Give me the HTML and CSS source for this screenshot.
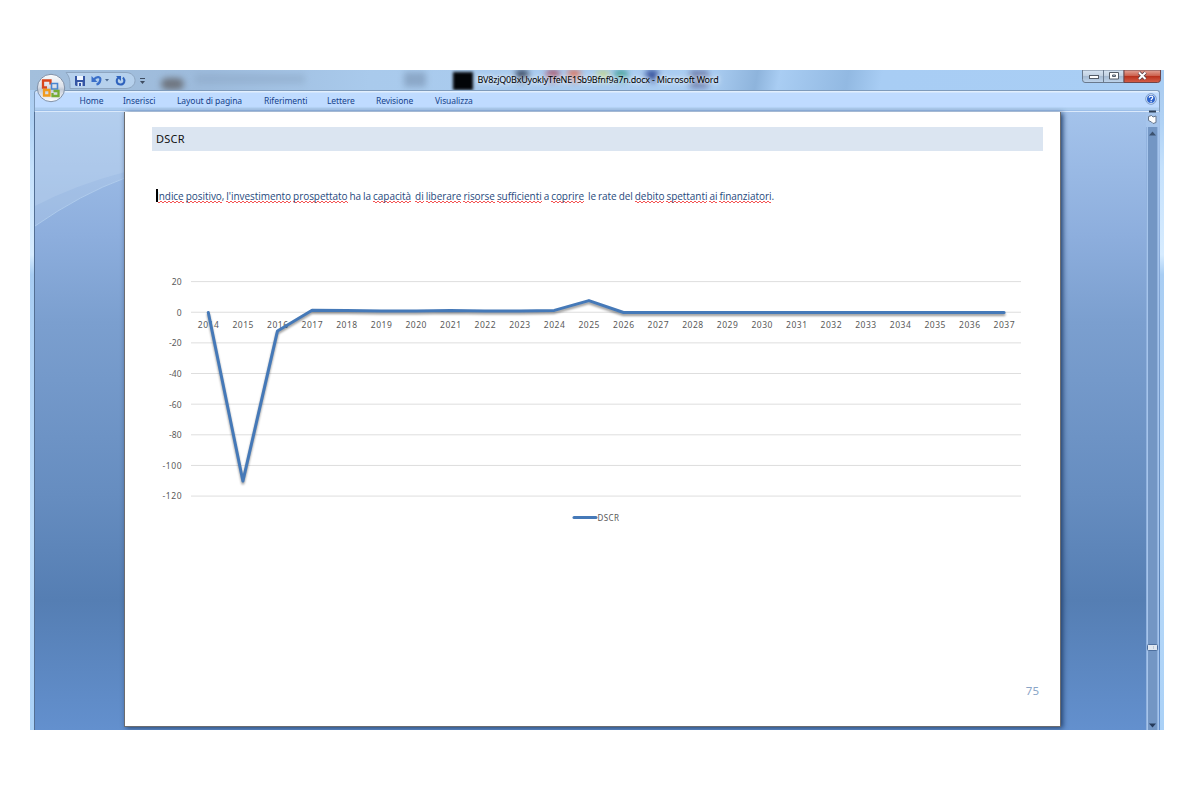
FILE: index.html
```html
<!DOCTYPE html>
<html lang="it">
	<head>
		<meta charset="utf-8">
		<title>Microsoft Word</title>
		<link rel="stylesheet" href="styles.css">
	</head>
	<body>
		<div class="window">
			<header class="titlebar">
				<!-- desktop seen through the glass -->
				<div class="glass">
					<i class="spot s0"></i><i class="spot s1"></i><i class="spot s2"></i><i class="spot s3"></i><i class="spot s4"></i><i class="spot s5"></i>
					<i class="spot s6"></i><i class="spot s7"></i><i class="spot s8"></i><i class="spot s9"></i><i class="spot s10"></i>
				</div>
				<svg class="quick" width="116" height="20" viewBox="0 0 116 20">
					<path d="M2 2.500H62C74 3 74 18 62 18.500H6C6 11 6 7 2 2.500Z" fill="#c5def8" fill-opacity=".6" stroke="#8ea6c1"/>
					<path d="M11 6h10v10H12l-1-1z" fill="#3455a4"/>
					<path d="M13 6h6v4h-6z" fill="#eef5ff"/>
					<path d="M13.500 12h5v4h-5z" fill="#dce8f8"/>
					<path d="M15 13h2v3h-2z" fill="#3455a4"/>
					<path d="M30 9.500C32.500 6 37 6.500 36.300 10C36 12.500 34.500 14 32.500 14.500" fill="none" stroke="#3a6fc9" stroke-width="2.200"/>
					<path d="M27.500 6v6h6z" fill="#3a6fc9"/>
					<path d="M41 9h4l-2 2.500z" fill="#49688f"/>
					<path d="M54.500 7.500C51.500 10 52.500 14.500 56.500 14.500S61.500 10.500 59 7.500" fill="none" stroke="#2f62bd" stroke-width="2"/>
					<path d="M52 6h5v5z" fill="#2f62bd"/>
					<path d="M76 8.500h5" stroke="#3e4c60"/>
					<path d="M76 11h5l-2.500 3z" fill="#3e4c60"/>
				</svg>
				<h1>BV8zjQ0BxUyoklyTfeNE1Sb9Bfnf9a7n.docx - Microsoft Word</h1>
				<svg class="controls" width="79" height="13" viewBox="0 0 79 13">
					<defs>
						<linearGradient id="btn" x2="0" y2="1">
							<stop offset="0" stop-color="#d8e5f3"/><stop offset=".45" stop-color="#c2d1e2"/>
							<stop offset=".5" stop-color="#a5b9d0"/><stop offset="1" stop-color="#c0d6ed"/>
						</linearGradient>
						<linearGradient id="close" x2="0" y2="1">
							<stop offset="0" stop-color="#e3a69a"/><stop offset=".45" stop-color="#cd6350"/>
							<stop offset=".5" stop-color="#b8301c"/><stop offset="1" stop-color="#d5604a"/>
						</linearGradient>
					</defs>
					<path d="M.500 0H42V12.500H3Q.500 12.500 .500 9.500Z" fill="url(#btn)" stroke="#69798d"/>
					<path d="M42 0H78.500V9.500Q78.500 12.500 75.500 12.500H42Z" fill="url(#close)" stroke="#6f4549"/>
					<path d="M21.500 0v12" stroke="#69798d"/>
					<rect x="7.500" y="5.500" width="9" height="3" fill="#fff" stroke="#555d68"/>
					<path d="M27.500 2.500h9v6.500h-9zM30.500 5h3v1.500h-3z" fill="#fff" fill-rule="evenodd" stroke="#555d68"/>
					<path d="M57 2.500l6.500 6.500M63.500 2.500l-6.500 6.500" stroke="#583c43" stroke-width="3.600"/>
					<path d="M57 2.500l6.500 6.500M63.500 2.500l-6.500 6.500" stroke="#fff" stroke-width="2"/>
				</svg>
			</header>

			<nav class="ribbon">
				<a class="t1">Home</a>
				<a class="t2">Inserisci</a>
				<a class="t3">Layout di pagina</a>
				<a class="t4">Riferimenti</a>
				<a class="t5">Lettere</a>
				<a class="t6">Revisione</a>
				<a class="t7">Visualizza</a>
				<svg class="help" width="12" height="12" viewBox="0 0 12 12">
					<circle cx="6" cy="6" r="5.300" fill="#d9e8fa" stroke="#7c9cc8"/>
					<circle cx="6" cy="6" r="4" fill="#2c63cd"/>
					<path d="M4.300 4.700C4.300 2.500 8 2.700 7.700 4.700C7.500 5.700 6.100 5.800 6.100 7.200M6.100 8v1.200" fill="none" stroke="#fff" stroke-width="1.200"/>
				</svg>
			</nav>

			<!-- office button -->
			<svg class="orb" width="30" height="30" viewBox="0 0 30 30">
				<defs>
					<linearGradient id="orb" x2="0" y2="1">
						<stop offset="0" stop-color="#fbfcfd"/><stop offset=".45" stop-color="#dbe0e9"/>
						<stop offset=".55" stop-color="#c3cbd8"/><stop offset="1" stop-color="#fff"/>
					</linearGradient>
				</defs>
				<circle cx="15" cy="15" r="13.700" fill="url(#orb)" stroke="#7f90a8"/>
				<g fill="none" stroke-width="2.300">
					<path d="M11 14.500H7V7.500h7.500v4" stroke="#d8451c"/>
					<path d="M15.500 10.500H21.500v5.500h-6z" stroke="#4a86d0" stroke-width="1.600"/>
					<path d="M13.500 17H8v5.500h5.500z" stroke="#f09a1c"/>
					<path d="M17.500 18h5v5h-6v-3" stroke="#76ac35"/>
				</g>
			</svg>

			<div class="workspace">
				<svg class="swoosh" width="1112" height="618" viewBox="0 0 1112 618">
					<path d="M0 0H90V60Q40 73 0 94Z" fill="#d2e4f8" fill-opacity=".2"/>
					<path d="M0 0H90V66Q46 82 0 114Z" fill="#c8dcf0" fill-opacity=".25"/>
					<path d="M0 114Q46 82 90 66" fill="none" stroke="#b4d0ee" stroke-opacity=".8"/>
				</svg>

				<main class="page">
					<h2>DSCR</h2>

					<p><span class="caret"></span><u>Indice</u> <u>positivo</u>, <u>l'investimento</u> <u>prospettato</u> ha la <u>capacità</u>&nbsp; <u>di</u> <u>liberare</u> <u>risorse</u> <u>sufficienti</u> a <u>coprire</u> &nbsp;le rate del <u>debito</u> <u>spettanti</u> <u>ai</u> <u>finanziatori</u>.</p>

					<svg class="chart" width="880" height="260" viewBox="0 0 880 260">
						<g id="grid"></g>
						<g id="labels"></g>
						<polyline id="line"/>
						<path class="series" d="M419 247.500h22"/>
						<text class="legend" x="442.500" y="250.500" textLength="21.500">DSCR</text>
					</svg>

					<span class="number">75</span>
				</main>

				<svg class="scrollbar" width="13" height="618" viewBox="0 0 13 618">
					<path d="M0 0h13v618h-13z" fill="#a6c5ec"/>
					<path d="M2 15h9v603h-9z" fill="#7396c4"/>
					<path d="M.500 15v603M11.500 15v603" stroke="#91b2de"/>
					<path d="M3 -.500h7" stroke="#2f4058" stroke-width="2"/>
					<path d="M2.500 4.500l3-1 1.500 1.500 3-1v6.500l-3 1-1.500-1.500-3-1.500z" fill="#fff" stroke="#65758c"/>
					<path d="M3 23.500h7l-3.500-4z" fill="#3c5270"/>
					<rect x="1.500" y="532.500" width="10" height="6" rx="1" fill="#dfe7f0" stroke="#4d6f9e"/>
					<path d="M7.500 534v3" stroke="#bcc8d6"/>
					<path d="M3 611.500h7l-3.500 4z" fill="#253a5b"/>
				</svg>
			</div>
		</div>

		<script src="chart.js"></script>
	</body>
</html>
```
FILE: styles.css
```css
body {
	margin: 0;
	background: #fff;
	font-family: "Noto Sans", "Open Sans", sans-serif;
}

.window {
	position: relative;
	box-sizing: border-box;
	width: 1134px;
	height: 660px;
	margin: 70px 0 0 30px;
	padding: 0 4px;
	overflow: hidden;
	display: flex;
	flex-direction: column;
	background: linear-gradient(#a9caee 0, #b0d2f5 8%, #c5e1fc 15%, #d7ecff 28%, #a8cdf3 31%, #b9daf9 70%, #aad1f7 100%);
}

/* title bar */
.titlebar {
	position: relative;
	display: flex;
	align-items: flex-start;
	height: 20px;
	margin: 0 -4px;
	background: linear-gradient(100deg, #a3bfdc 0, #9dbbdc 16%, #a9caec 30%, #aacdf2 60%, #8eb4dc 64%, #a9cdf3 66%, #92b9e2 72%, #a8cdf4 75%, #a9cef4 100%);
}
.glass {
	position: absolute;
	inset: 0;
	overflow: hidden;
}
.spot {
	position: absolute;
	top: 0;
	width: 12px;
	height: 11px;
	filter: blur(3px);
}
.s0 { left: 165px; top: 4px; width: 110px; height: 10px; background: #8ba6c4; opacity: .45; }
.s1 { left: 131px; top: 8px; width: 23px; height: 12px; background: #6f7680; border-radius: 8px; }
.s2 { left: 374px; top: 2px; width: 22px; height: 15px; background: #7891b0; opacity: .6; }
.s3 { left: 423px; top: 2px; width: 20px; height: 18px; background: #020508; filter: blur(1.5px); }
.s4 { left: 486px; background: #34445f; }
.s5 { left: 517px; background: #a5506c; }
.s6 { left: 538px; background: #d9705c; }
.s7 { left: 567px; background: #bbd39a; }
.s8 { left: 585px; background: #3f9f98; }
.s9 { left: 616px; background: #344f9c; }
.s10 { left: 660px; width: 18px; height: 18px; background: #6d7eae; }
.quick {
	position: relative;
	margin-left: 34px;
}
h1 {
	position: relative;
	width: 241px;
	margin: 0 0 0 297.500px;
	font-size: 9px;
	line-height: 19px;
	font-weight: normal;
	letter-spacing: -.23px;
	white-space: nowrap;
	color: #000;
	text-shadow: 0 0 3px #e0edfa, 0 0 4px #e0edfa, 0 0 6px #e0edfa;
}
.controls {
	position: relative;
	margin: 0 3px 0 auto;
}

/* ribbon */
.ribbon {
	position: relative;
	box-sizing: border-box;
	display: flex;
	flex: none;
	height: 22px;
	border: solid #7f9bbb;
	border-width: 1px 1px 0;
	border-radius: 3px 3px 0 0;
	background: linear-gradient(#e2effd 0 1px, #bfdbff 2px 16px, #aecdee 17px 19px, #9dbfe9 19px 20px, #dae9fb 20px);
}
.ribbon a {
	font-size: 8.500px;
	line-height: 19px;
	white-space: nowrap;
	color: #15428b;
	letter-spacing: -.08px;
}
.t1 { width: 43.500px; margin-left: 44.500px; }
.t2 { width: 54px; }
.t3 { width: 87px; }
.t4 { width: 63px; }
.t5 { width: 49px; }
.t6 { width: 59px; }
.t7 { width: 60px; }
.help { margin: 2px 2px 0 auto; }
.orb {
	position: absolute;
	left: 6px;
	top: 3px;
}

/* document area */
.workspace {
	position: relative;
	box-sizing: border-box;
	display: flex;
	height: 618px;
	border-left: 1px solid #536f94;
	background: linear-gradient(#a4c3eb 0, #8daedd 20%, #7b9fcf 34%, #668dc0 62%, #557eb3 79%, #6390ce 100%);
}
.swoosh {
	position: absolute;
	left: 0;
	top: 0;
}
.page {
	position: relative;
	box-sizing: border-box;
	width: 937px;
	height: 615px;
	margin-left: 89px;
	padding: 15px 17px 0 27px;
	border: solid #6b6c70;
	border-width: 0 1px 1px;
	background: #fff;
	box-shadow: 2px 1px 5px #23426f;
}
h2 {
	margin: 0;
	height: 24px;
	padding-left: 4px;
	background: #dbe5f1;
	font: 11px/23px "Noto Sans", sans-serif;
	letter-spacing: .25px;
	color: #111;
}
p {
	position: relative;
	margin: 37px 0 0 4px;
	font: 10px/16px "Open Sans", sans-serif;
	letter-spacing: -.05px;
	word-spacing: -.56px;
	white-space: nowrap;
	color: #1f497d;
}
/* spelling marks */
u {
	padding-bottom: 1px;
	text-decoration: none;
	background:
		repeating-linear-gradient(90deg, #f45454 0 2px, transparent 2px 4px) 0 12px / 100% 1px no-repeat,
		repeating-linear-gradient(90deg, transparent 0 2px, #f45454 2px 4px) 0 13px / 100% 1px no-repeat;
}
.caret {
	position: absolute;
	left: 0;
	top: 1px;
	width: 1.500px;
	height: 13px;
	background: #000;
}
.chart {
	display: block;
	margin: 66px 0 0 3px;
	overflow: visible;
	font-size: 8.500px;
}
.chart text { fill: #595959; }
.chart .legend { font-size: 8px; }
#grid path { stroke: #dedede; }
#line, .series {
	fill: none;
	stroke: #4579b8;
	stroke-width: 3;
	stroke-linejoin: round;
	stroke-linecap: round;
}
#line { filter: drop-shadow(0 2px 1px rgba(0, 0, 0, .4)); }
.number {
	position: absolute;
	right: 21px;
	bottom: 27px;
	font-size: 11.500px;
	line-height: 16px;
	color: #8aa5c7;
}
.scrollbar {
	margin-left: auto;
	margin-right: 1px;
	overflow: visible;
}
```
FILE: chart.js
```js
var ns = "http://www.w3.org/2000/svg";
var grid = document.getElementById("grid");
var labels = document.getElementById("labels");
var values = [0, -110, -12, 1.5, 1.4, 1, 1, 1.4, 1, 1, 1.4, 7.8, 0, 0, 0, 0, 0, 0, 0, 0, 0, 0, 0, 0];

// chart origin and steps, in px
var left = 36, top0 = 11.6, row = 30.64, col = 34.6;

function addText(x, y, anchor, value, width){
	var t = document.createElementNS(ns, "text");
	t.setAttribute("x", x);
	t.setAttribute("y", y);
	t.setAttribute("text-anchor", anchor);
	if(width) t.setAttribute("textLength", width);
	t.textContent = value;
	labels.appendChild(t);
}

for(var i = 0; i < 8; i++){
	var y = top0 + i * row;
	var p = document.createElementNS(ns, "path");
	p.setAttribute("d", "M" + left + " " + y + "h830");
	grid.appendChild(p);
	var label = 20 - i * 20;
	addText(26.5, y + 3.4, "end", label, label <= -100 ? 19 : 0);
}

var points = values.map(function(v, i){
	var x = left + 17.3 + i * col;
	addText(x, 58.3, "middle", 2014 + i, 21);
	return x + "," + (top0 + 0.3 + (20 - v) / 20 * row);
});
document.getElementById("line").setAttribute("points", points.join(" "));
```
